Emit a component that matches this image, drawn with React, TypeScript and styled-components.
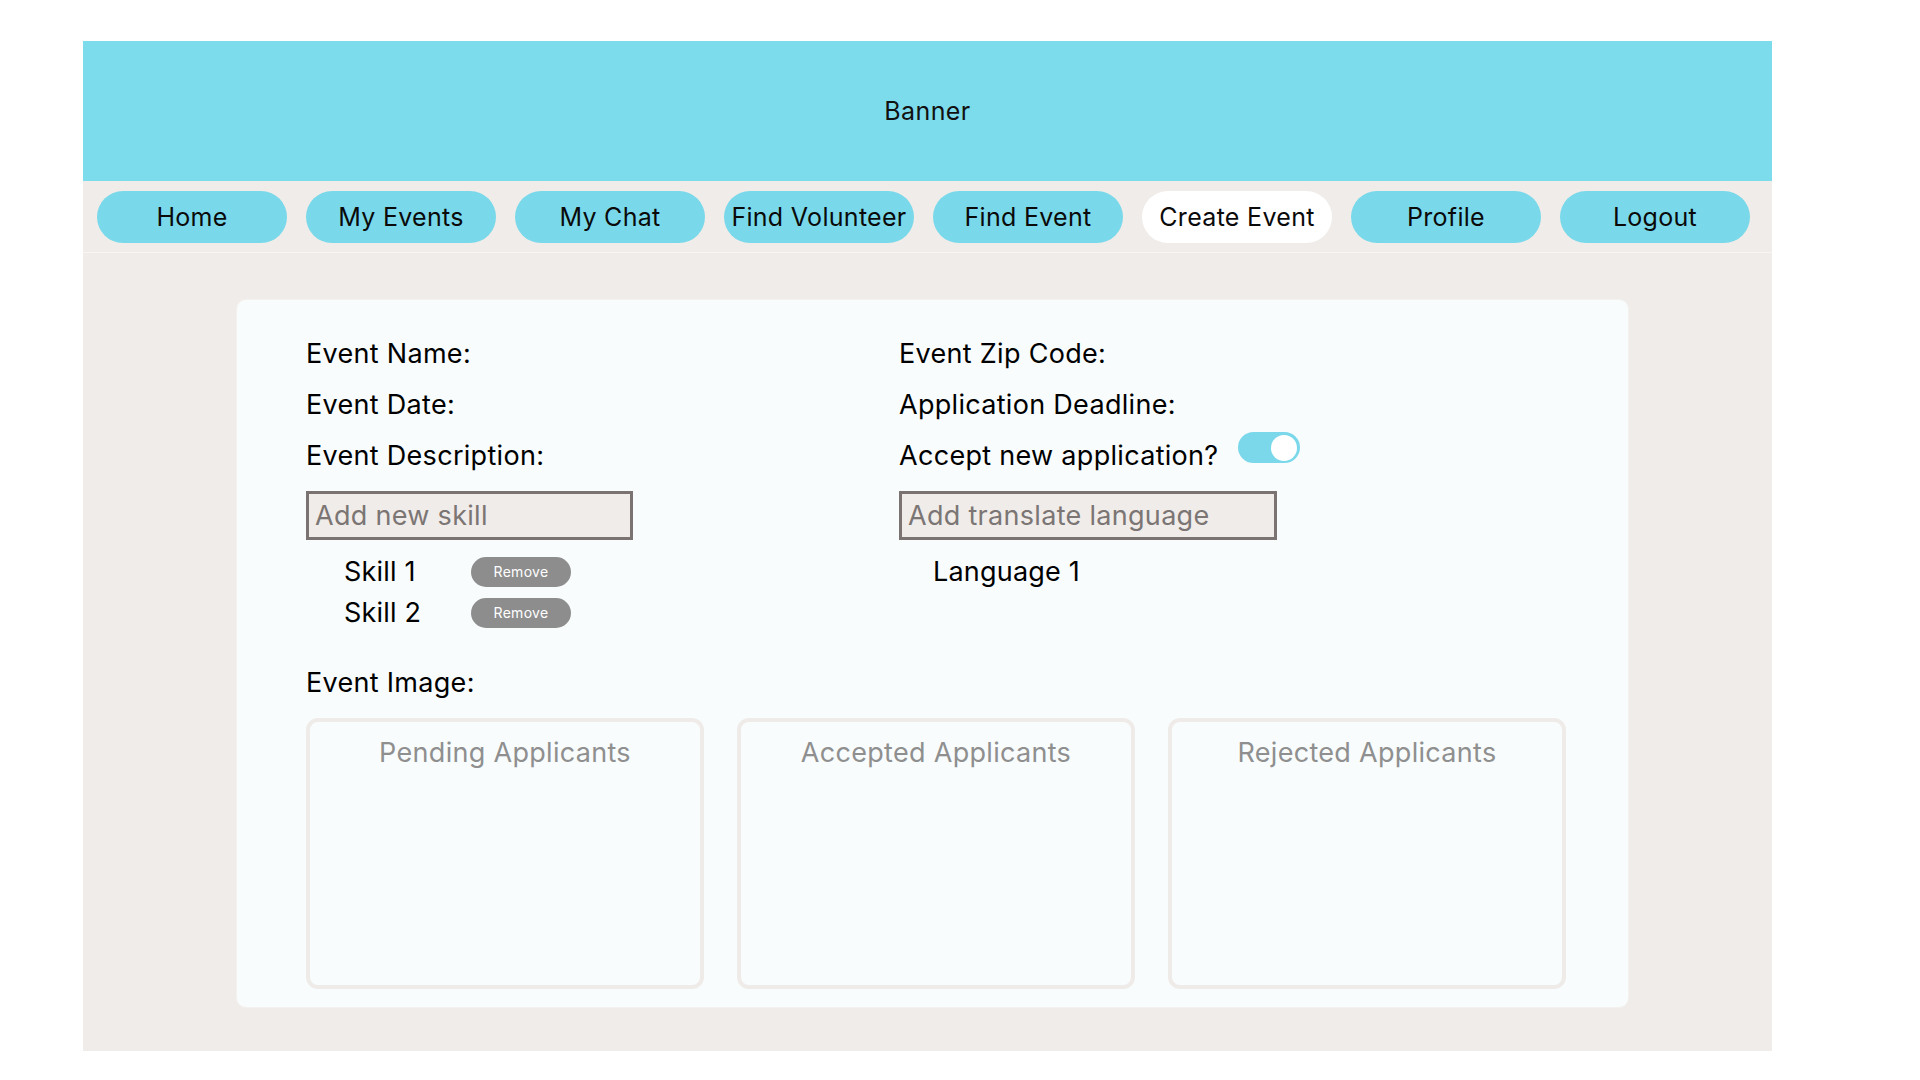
import React from "react";
import styled, { createGlobalStyle } from "styled-components";

const Global = createGlobalStyle`
  html, body { margin: 0; padding: 0; background: #ffffff; }
  body { font-family: Inter, "Open Sans", Lato, sans-serif; color: #000; }
  * { box-sizing: border-box; }
`;

const Page = styled.div`
  padding: 41px 0 0 83px;
  width: 1920px;
  height: 1080px;
`;

const Frame = styled.div`
  width: 1689px;
  display: flex;
  flex-direction: column;
`;

const Banner = styled.header`
  height: 140px;
  background: #7ddcec;
  display: flex;
  align-items: center;
  justify-content: center;
  font-size: 25px;
  letter-spacing: 0.4px;
  color: #111;
`;

const Nav = styled.nav`
  height: 72px;
  background: #f0ece9;
  border-bottom: 1px solid #f8f6f4;
  display: flex;
  align-items: flex-start;
  padding: 10px 0 0 14px;
  gap: 19px;
`;

const NavButton = styled.button<{ $active?: boolean }>`
  width: 190px;
  height: 52px;
  border: none;
  border-radius: 26px;
  background: ${(p) => (p.$active ? "#ffffff" : "#79d9ea")};
  font-family: inherit;
  font-size: 25px;
  letter-spacing: 0.3px;
  color: #0a0a0a;
  padding: 0;
  white-space: nowrap;
  display: flex;
  align-items: center;
  justify-content: center;
  cursor: pointer;
`;

const Main = styled.main`
  background: #f0ece9;
  height: 798px;
  padding: 46px 0 0 153px;
`;

const Card = styled.section`
  width: 1393px;
  height: 709px;
  background: #f8fcfd;
  border: 1px solid #f4f1ee;
  border-radius: 10px;
  padding: 28px 62px 0 69px;
  display: flex;
  flex-direction: column;
`;

const Columns = styled.div`
  display: grid;
  grid-template-columns: 593px 1fr;
`;

const Column = styled.div`
  display: flex;
  flex-direction: column;
`;

const Label = styled.div`
  font-size: 27px;
  letter-spacing: 0.3px;
  line-height: 51px;
  height: 51px;
  white-space: nowrap;
`;

const ToggleRow = styled.div`
  display: flex;
  align-items: center;
  gap: 20px;
  height: 51px;
`;

const Toggle = styled.div`
  width: 62px;
  height: 31px;
  border-radius: 16px;
  background: #7bd8ea;
  display: flex;
  align-items: center;
  justify-content: flex-end;
  padding-right: 3px;
  margin-top: -16px;
`;

const Knob = styled.div`
  width: 26px;
  height: 26px;
  border-radius: 50%;
  background: #ffffff;
`;

const Input = styled.input<{ $w: number }>`
  width: ${(p) => p.$w}px;
  height: 49px;
  margin-top: 10px;
  border: 3px solid #7a7372;
  background: #f0ece9;
  font-family: inherit;
  font-size: 27px;
  letter-spacing: 0.3px;
  padding: 0 6px;
  color: #222;
  outline: none;
  &::placeholder { color: #7b7574; }
`;

const ItemList = styled.div<{ $indent: number }>`
  display: flex;
  flex-direction: column;
  padding: 11px 0 0 ${(p) => p.$indent}px;
`;

const ItemRow = styled.div`
  display: flex;
  align-items: center;
  height: 41px;
`;

const ItemText = styled.span`
  font-size: 27px;
  letter-spacing: 0.2px;
  width: 127px;
  white-space: nowrap;
`;

const RemoveButton = styled.button`
  width: 100px;
  height: 30px;
  border: none;
  border-radius: 15px;
  background: #8d8d8d;
  color: #ffffff;
  font-family: inherit;
  font-size: 14px;
  letter-spacing: 0.3px;
  padding: 0;
  cursor: pointer;
`;

const ImageLabel = styled(Label)`
  margin-top: 24px;
`;

const Boxes = styled.div`
  display: grid;
  grid-template-columns: repeat(3, 398px);
  gap: 33px;
  margin-top: 10px;
`;

const Box = styled.div`
  height: 271px;
  border: 4px solid #efebe8;
  border-radius: 12px;
  display: flex;
  justify-content: center;
  padding-top: 14px;
  font-size: 27px;
  letter-spacing: 0.3px;
  color: #8f8f8f;
`;

const navItems = [
  "Home",
  "My Events",
  "My Chat",
  "Find Volunteer",
  "Find Event",
  "Create Event",
  "Profile",
  "Logout",
];

export default function App() {
  return (
    <>
      <Global />
      <Page>
        <Frame>
          <Banner>Banner</Banner>
          <Nav>
            {navItems.map((n) => (
              <NavButton key={n} $active={n === "Create Event"}>
                {n}
              </NavButton>
            ))}
          </Nav>
          <Main>
            <Card>
              <Columns>
                <Column>
                  <Label>Event Name:</Label>
                  <Label>Event Date:</Label>
                  <Label>Event Description:</Label>
                  <Input $w={327} placeholder="Add new skill" />
                  <ItemList $indent={38}>
                    <ItemRow>
                      <ItemText>Skill 1</ItemText>
                      <RemoveButton>Remove</RemoveButton>
                    </ItemRow>
                    <ItemRow>
                      <ItemText>Skill 2</ItemText>
                      <RemoveButton>Remove</RemoveButton>
                    </ItemRow>
                  </ItemList>
                </Column>
                <Column>
                  <Label>Event Zip Code:</Label>
                  <Label>Application Deadline:</Label>
                  <ToggleRow>
                    <Label>Accept new application?</Label>
                    <Toggle>
                      <Knob />
                    </Toggle>
                  </ToggleRow>
                  <Input $w={378} placeholder="Add translate language" />
                  <ItemList $indent={34}>
                    <ItemRow>
                      <ItemText>Language 1</ItemText>
                    </ItemRow>
                  </ItemList>
                </Column>
              </Columns>
              <ImageLabel>Event Image:</ImageLabel>
              <Boxes>
                <Box>Pending Applicants</Box>
                <Box>Accepted Applicants</Box>
                <Box>Rejected Applicants</Box>
              </Boxes>
            </Card>
          </Main>
        </Frame>
      </Page>
    </>
  );
}
